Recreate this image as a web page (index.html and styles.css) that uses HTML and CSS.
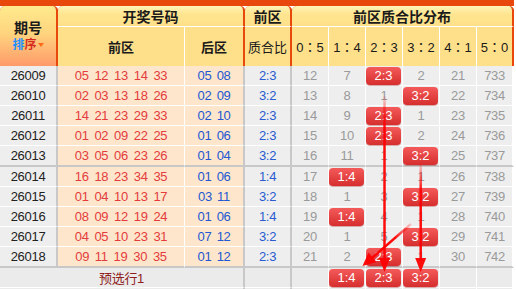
FILE: index.html
```html
<!DOCTYPE html>
<html lang="zh">
<head>
<meta charset="utf-8">
<title>前区质合比分布</title>
<link rel="stylesheet" href="styles.css">
</head>
<body>
<div class="page">
<table class="chart">
<colgroup>
<col class="c-per"><col class="c-front"><col class="c-back"><col class="c-ratio">
<col class="c-d"><col class="c-d"><col class="c-d"><col class="c-d"><col class="c-d"><col class="c-d">
</colgroup>
<thead>
<tr class="h1">
<th rowspan="2" class="per-h"><div class="qh">期号</div><div class="sort"><span class="s1">排</span><span class="s2">序</span><span class="tri"></span></div></th>
<th colspan="2">开奖号码</th>
<th>前区</th>
<th colspan="6">前区质合比分布</th>
</tr>
<tr class="h2">
<th class="ws b">前区</th>
<th class="os b">后区</th>
<th class="os">质合比</th>
<th class="ws r">0：5</th>
<th class="ws r">1：4</th>
<th class="ws r">2：3</th>
<th class="ws r">3：2</th>
<th class="ws r">4：1</th>
<th class="os r">5：0</th>
</tr>
</thead>
<tbody>
<tr><td class="per">26009</td><td class="fr">05 12 13 14 33</td><td class="bk">05 08</td><td class="ra">2:3</td><td class="d">12</td><td class="d">7</td><td class="d"><span class="bd">2:3</span></td><td class="d">2</td><td class="d">21</td><td class="d last">733</td></tr>
<tr><td class="per">26010</td><td class="fr">02 03 13 18 26</td><td class="bk">02 09</td><td class="ra">3:2</td><td class="d">13</td><td class="d">8</td><td class="d">1</td><td class="d"><span class="bd">3:2</span></td><td class="d">22</td><td class="d last">734</td></tr>
<tr><td class="per">26011</td><td class="fr">14 21 23 29 33</td><td class="bk">02 10</td><td class="ra">2:3</td><td class="d">14</td><td class="d">9</td><td class="d"><span class="bd">2:3</span></td><td class="d">1</td><td class="d">23</td><td class="d last">735</td></tr>
<tr><td class="per">26012</td><td class="fr">01 02 09 22 25</td><td class="bk">01 06</td><td class="ra">2:3</td><td class="d">15</td><td class="d">10</td><td class="d"><span class="bd">2:3</span></td><td class="d">2</td><td class="d">24</td><td class="d last">736</td></tr>
<tr class="g5"><td class="per">26013</td><td class="fr">03 05 06 23 26</td><td class="bk">01 04</td><td class="ra">3:2</td><td class="d">16</td><td class="d">11</td><td class="d">1</td><td class="d"><span class="bd">3:2</span></td><td class="d">25</td><td class="d last">737</td></tr>
<tr><td class="per">26014</td><td class="fr">16 18 23 34 35</td><td class="bk">01 06</td><td class="ra">1:4</td><td class="d">17</td><td class="d"><span class="bd">1:4</span></td><td class="d">2</td><td class="d">1</td><td class="d">26</td><td class="d last">738</td></tr>
<tr><td class="per">26015</td><td class="fr">01 04 10 13 17</td><td class="bk">03 11</td><td class="ra">3:2</td><td class="d">18</td><td class="d">1</td><td class="d">3</td><td class="d"><span class="bd">3:2</span></td><td class="d">27</td><td class="d last">739</td></tr>
<tr><td class="per">26016</td><td class="fr">08 09 12 19 24</td><td class="bk">01 06</td><td class="ra">1:4</td><td class="d">19</td><td class="d"><span class="bd">1:4</span></td><td class="d">4</td><td class="d">1</td><td class="d">28</td><td class="d last">740</td></tr>
<tr><td class="per">26017</td><td class="fr">04 05 10 23 31</td><td class="bk">07 12</td><td class="ra">3:2</td><td class="d">20</td><td class="d">1</td><td class="d">5</td><td class="d"><span class="bd">3:2</span></td><td class="d">29</td><td class="d last">741</td></tr>
<tr class="g5"><td class="per">26018</td><td class="fr">09 11 19 30 35</td><td class="bk">01 12</td><td class="ra">2:3</td><td class="d">21</td><td class="d">2</td><td class="d"><span class="bd">2:3</span></td><td class="d">1</td><td class="d">30</td><td class="d last">742</td></tr>
<tr class="foot"><td colspan="3" class="ft">预选行1</td><td class="ra"></td><td class="d"></td><td class="d"><span class="bd">1:4</span></td><td class="d"><span class="bd">2:3</span></td><td class="d"><span class="bd">3:2</span></td><td class="d"></td><td class="d last"></td></tr>
<tr class="foot"><td colspan="3" class="ft"></td><td class="ra"></td><td class="d"></td><td class="d"></td><td class="d"></td><td class="d"></td><td class="d"></td><td class="d last"></td></tr>
</tbody>
</table>
<svg class="arrows" width="516" height="289" viewBox="0 0 516 289">
<defs>
<linearGradient id="ga" gradientUnits="userSpaceOnUse" x1="0" y1="96" x2="0" y2="128"><stop offset="0" stop-color="#ff0000" stop-opacity="0.1"/><stop offset="1" stop-color="#ff0000" stop-opacity="0.95"/></linearGradient>
<linearGradient id="gb" gradientUnits="userSpaceOnUse" x1="0" y1="163" x2="0" y2="190"><stop offset="0" stop-color="#ff0000" stop-opacity="0.1"/><stop offset="1" stop-color="#ff0000" stop-opacity="0.95"/></linearGradient>
<linearGradient id="gc" gradientUnits="userSpaceOnUse" x1="411" y1="224" x2="395" y2="238"><stop offset="0" stop-color="#ff0000" stop-opacity="0.15"/><stop offset="1" stop-color="#ff0000" stop-opacity="0.95"/></linearGradient>
</defs>
<line x1="384.5" y1="96" x2="384.5" y2="260" stroke="url(#ga)" stroke-width="2.5"/>
<polygon points="379,258 390,258 384.5,272" fill="#ff0000" fill-opacity="0.95"/>
<line x1="420.7" y1="163" x2="420.7" y2="260" stroke="url(#gb)" stroke-width="2.5"/>
<polygon points="415.2,258 426.2,258 420.7,272" fill="#ff0000" fill-opacity="0.95"/>
<line x1="411" y1="224" x2="372" y2="258" stroke="url(#gc)" stroke-width="2.5"/>
<polygon points="376.5,262 368.5,252.5 362.5,266" fill="#ff0000" fill-opacity="0.95"/>
</svg>
</div>
</body>
</html>
```

FILE: styles.css
```css
* { box-sizing: border-box; }
html, body { margin: 0; padding: 0; background: #fff; }
body { font-family: "Liberation Sans", "Noto Sans CJK SC", sans-serif; }

.page { position: relative; width: 516px; height: 289px; overflow: hidden; }

.chart {
  table-layout: fixed;
  width: 514px;
  border-collapse: separate;
  border-spacing: 0;
  border-top: 6px solid #e9480c;
}
.chart thead { background: #e9480c; }

col.c-per { width: 58px; }
col.c-front { width: 127px; }
col.c-back { width: 60px; }
col.c-ratio { width: 47px; }
col.c-d { width: 37px; }

.chart th {
  padding: 0;
  color: #1a1a1a;
  font-family: "Liberation Sans", "Noto Sans CJK SC", sans-serif;
  text-align: center;
  vertical-align: middle;
}

.h1 th {
  height: 20px;
  font-size: 14px;
  font-weight: bold;
  border-bottom: 1px solid #fff;
  border-right: 2px solid #e9480c;
  border-radius: 5px 5px 0 0;
  background: linear-gradient(#fff4b8, #ffe590 40%, #ffe08a);
}
.h1 th.per-h {
  height: 59px;
  border-bottom: 0;
  background: linear-gradient(#ffea8e 0%, #ffd57e 45%, #ff9a6a 100%);
}
.qh { font-size: 14px; font-weight: bold; line-height: 18px; }
.sort { font-size: 12px; font-weight: bold; line-height: 16px; display: flex; justify-content: center; align-items: center; }
.s1 { color: #1e90ff; }
.s2 { color: #d62a1e; }
.tri {
  width: 0; height: 0;
  margin-left: 1px;
  border-left: 3.5px solid transparent;
  border-right: 3.5px solid transparent;
  border-top: 4px solid #ff6a1a;
}

.h2 th {
  height: 39px;
  font-size: 13px;
  font-weight: normal;
  background: #ffe08a;
}
.h2 th.b { font-weight: bold; }
.h2 th.ws { border-right: 1px solid #fff; }
.h2 th.os { border-right: 2px solid #e9480c; }
.h2 th.r { font-family: "Liberation Sans", "Noto Sans CJK JP", sans-serif; }

.chart td {
  padding: 0;
  height: 20px;
  text-align: center;
  vertical-align: middle;
  font-size: 13px;
  letter-spacing: -0.3px;
  background: #eeeeee;
  border-bottom: 1px solid #fff;
  white-space: nowrap;
}
.chart tr.g5 td { height: 21px; border-bottom: 2px solid #c8c8c8; }

td.per { color: #222; border-right: 2px solid #c8c8c8; }
td.fr { background: #fde6cc; color: #e43c3c; border-right: 1px solid #fff; word-spacing: 2.5px; }
td.bk { background: #fde6cc; color: #2358d2; border-right: 2px solid #c8c8c8; word-spacing: 2px; }
td.ra { color: #2a5bd0; border-right: 2px solid #c8c8c8; }
td.d { color: #9a9a9a; border-right: 1px solid #fff; }
td.d.last { border-right: 2px solid #fff; }
td.ft { background: #ebebeb; color: #8e1e1e; border-right: 2px solid #c8c8c8; }
tr.foot td { background: #ebebeb; }

.bd {
  display: block;
  width: 35px;
  height: 18px;
  line-height: 18px;
  border-radius: 4px;
  background: linear-gradient(#f45a5a, #d62e2e);
  box-shadow: 0 1px 0 rgba(150, 20, 20, 0.35);
  color: #fff;
  font-size: 13px;
  letter-spacing: 0;
  text-align: center;
}

.arrows { position: absolute; left: 0; top: 0; pointer-events: none; }
```
